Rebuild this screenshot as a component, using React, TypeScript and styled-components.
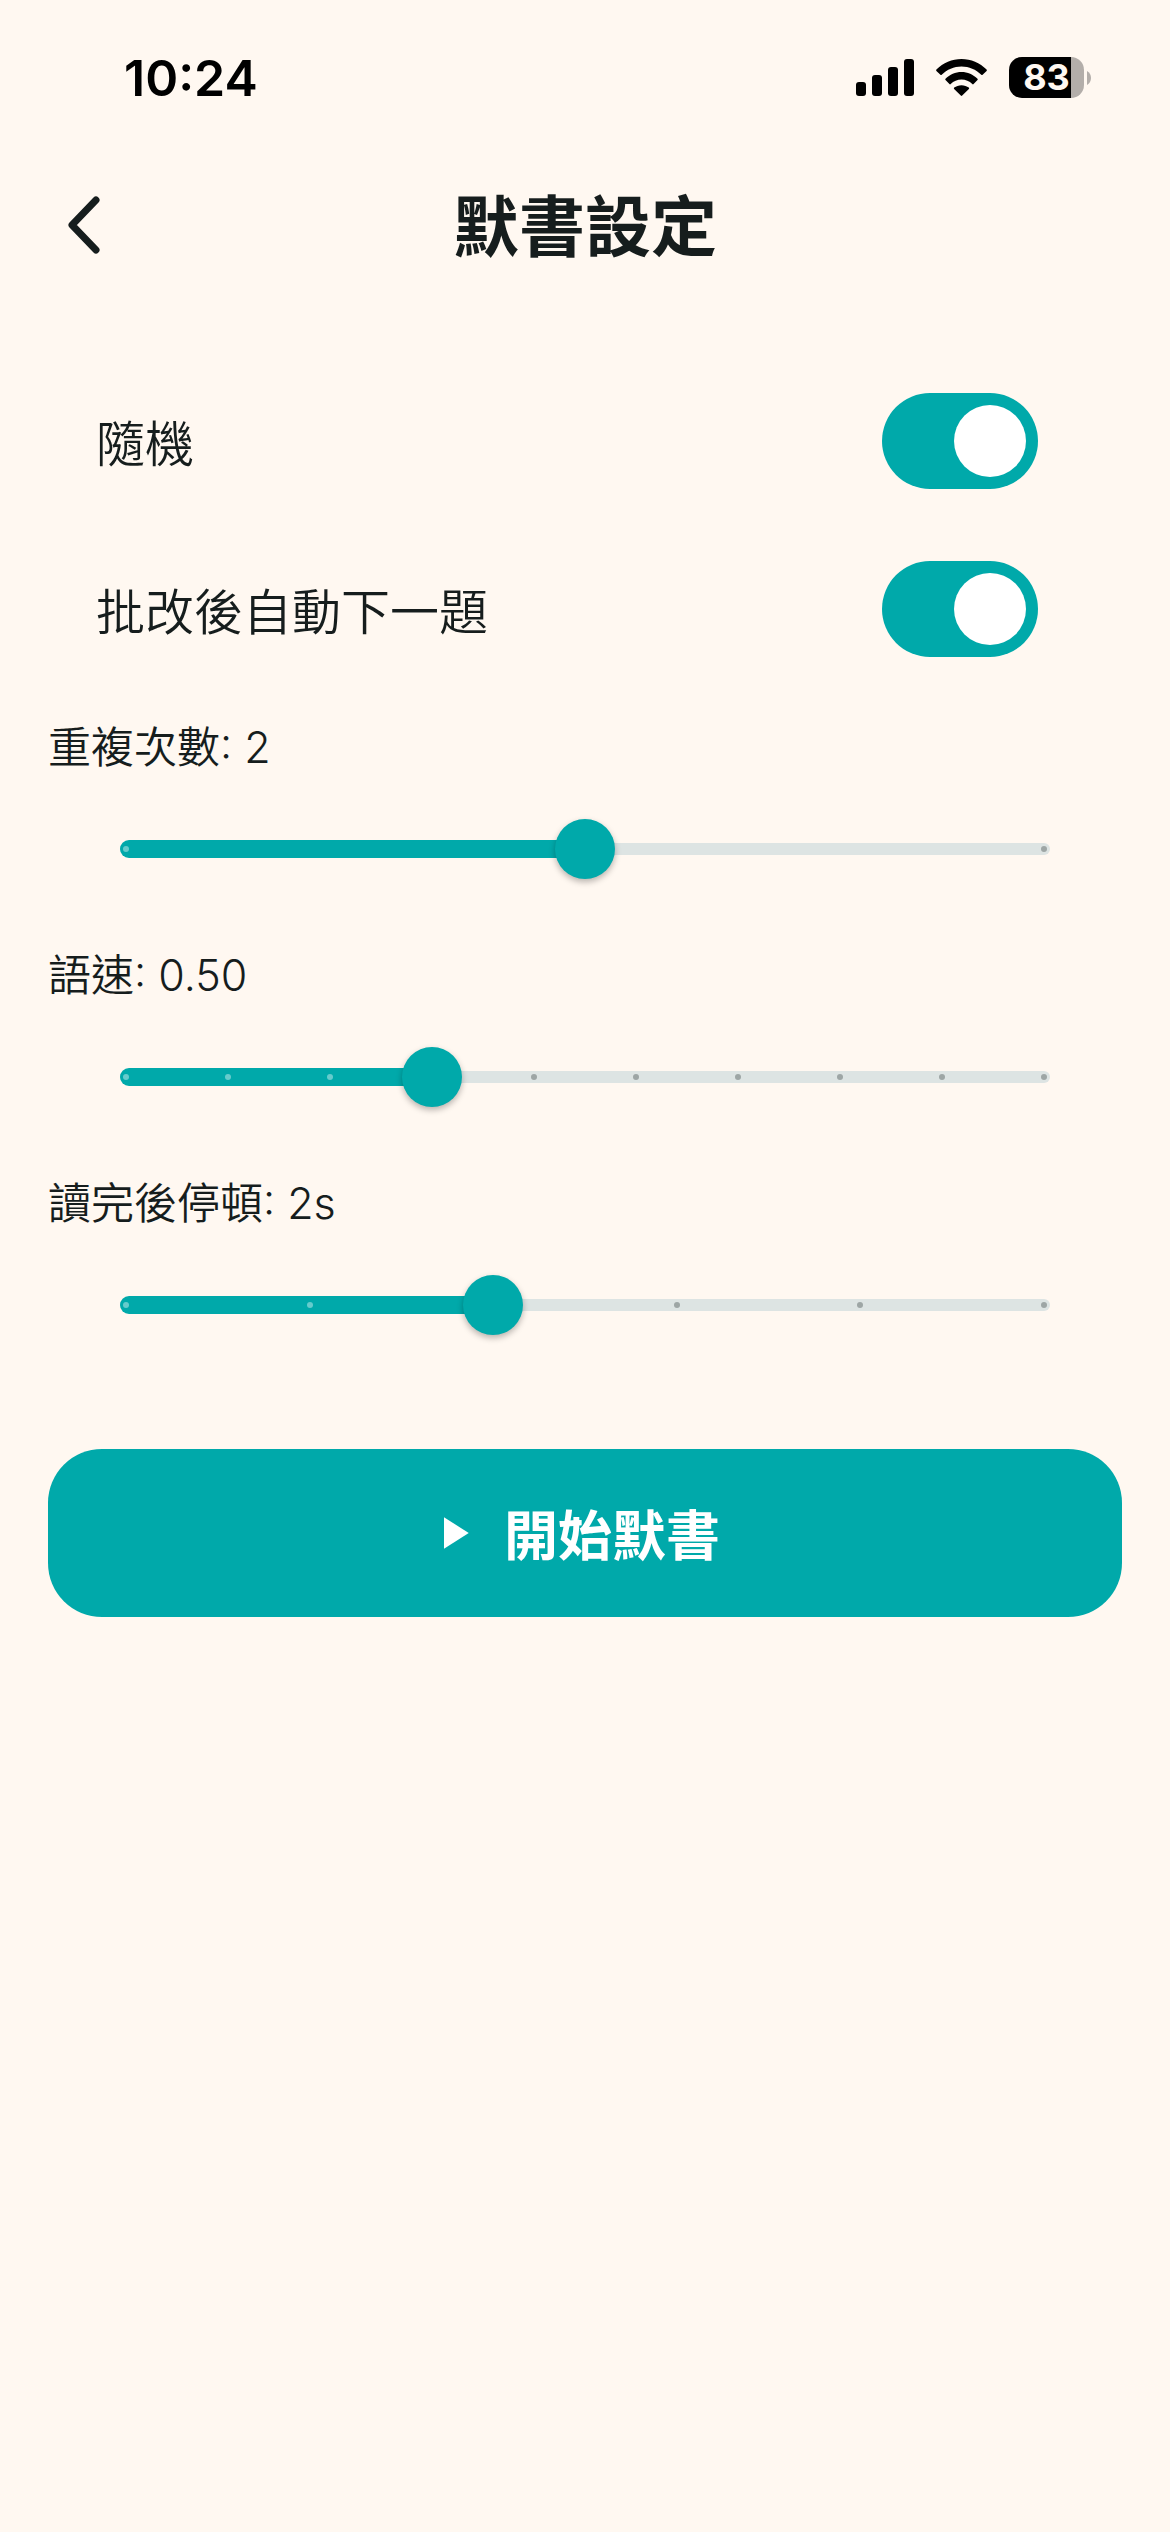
import React, { useId, useState } from "react";
import styled, { createGlobalStyle } from "styled-components";

const color = {
  surface: "#fff8f1",
  primary: "#00a9aa",
  ink: "#161d1d",
  rail: "#dde4e3",
  railDot: "#9ea6a5",
  fillDot: "#66cbcc",
};

const cjkFirst = `"Noto Sans CJK TC", Inter, sans-serif`;

const GlobalStyle = createGlobalStyle`
  *, *::before, *::after { box-sizing: border-box; }
  html { background: ${color.surface}; }
  body {
    margin: 0;
    background: ${color.surface};
    color: ${color.ink};
    font-family: Inter, "Noto Sans CJK TC", sans-serif;
  }
`;

const Screen = styled.div`
  min-height: 100vh;
  display: flex;
  flex-direction: column;
`;

const StatusBar = styled.div`
  height: 141px;
  padding: 14px 79px 0 124px;
  display: flex;
  align-items: center;
  justify-content: space-between;
  color: #000;
`;

const Clock = styled.time`
  font-size: 50px;
  line-height: 60px;
  font-weight: 600;
`;

const StatusIcons = styled.div`
  display: flex;
  align-items: center;
  gap: 22px;
`;

const BatteryGroup = styled.div`
  display: flex;
  align-items: center;
  gap: 3px;
`;

const BatteryBody = styled.div`
  width: 75px;
  height: 41px;
  border-radius: 13px;
  background: linear-gradient(to right, #000 62px, #b3aeaa 62px);
  color: ${color.surface};
  font-size: 36px;
  line-height: 41px;
  font-weight: 700;
  text-align: center;
`;

const AppBar = styled.header`
  height: 168px;
  padding: 0 12px;
  display: grid;
  grid-template-columns: 144px 1fr 144px;
  align-items: center;
`;

const BackButton = styled.button`
  width: 144px;
  height: 144px;
  padding: 0 0 0 55px;
  border: 0;
  background: none;
  color: inherit;
  display: flex;
  align-items: center;
  cursor: pointer;
`;

const Title = styled.h1`
  margin: 0;
  padding-bottom: 6px;
  font-family: ${cjkFirst};
  font-size: 66px;
  line-height: 84px;
  font-weight: 700;
  text-align: center;
`;

const Content = styled.main`
  padding: 48px;
  display: flex;
  flex-direction: column;
`;

const SwitchTile = styled.label`
  height: 168px;
  padding: 0 84px 0 48px;
  display: flex;
  align-items: center;
  justify-content: space-between;
  font-family: ${cjkFirst};
  font-size: 49px;
  line-height: 72px;
  font-weight: 350;
  cursor: pointer;
`;

const Toggle = styled.input`
  appearance: none;
  width: 156px;
  height: 96px;
  margin: 0;
  padding: 12px;
  border-radius: 48px;
  background: ${color.rail};
  display: flex;
  cursor: pointer;

  &::before {
    content: "";
    width: 72px;
    height: 72px;
    border-radius: 50%;
    background: #fff;
  }

  &:checked {
    background: ${color.primary};
    justify-content: flex-end;
  }
`;

const Setting = styled.div`
  padding-top: 24px;
  display: flex;
  flex-direction: column;
`;

const SettingLabel = styled.label`
  font-size: 43px;
  line-height: 60px;
  font-weight: 350;
`;

const SliderBox = styled.div`
  height: 144px;
  margin: 0 48px;
  display: grid;
  align-items: center;

  & > * {
    grid-area: 1 / 1;
  }
`;

const Rail = styled.div`
  height: 12px;
  margin: 0 24px;
  border-radius: 6px;
  background: ${color.rail};
`;

const FillArea = styled.div`
  margin: 0 24px;
`;

const Fill = styled.div`
  height: 18px;
  border-radius: 9px;
  background: ${color.primary};
`;

const Dots = styled.div`
  margin: 0 27px;
  display: flex;
  justify-content: space-between;
`;

const Dot = styled.span<{ $active: boolean }>`
  width: 6px;
  height: 6px;
  border-radius: 50%;
  background: ${(p) => (p.$active ? color.fillDot : color.railDot)};
`;

const Range = styled.input`
  appearance: none;
  width: 100%;
  height: 60px;
  margin: 0;
  background: transparent;
  cursor: pointer;

  &::-webkit-slider-thumb {
    appearance: none;
    width: 60px;
    height: 60px;
    border-radius: 50%;
    background: ${color.primary};
    box-shadow: 0 3px 6px rgba(0, 0, 0, 0.28);
  }
`;

const StartButton = styled.button`
  height: 168px;
  margin-top: 72px;
  padding: 0 72px 0 48px;
  border: 0;
  border-radius: 54px;
  background: ${color.primary};
  color: #fff;
  display: flex;
  align-items: center;
  justify-content: center;
  gap: 24px;
  font-family: ${cjkFirst};
  font-size: 54px;
  line-height: 72px;
  font-weight: 700;
  cursor: pointer;
`;

function SignalIcon() {
  return (
    <svg width="58" height="37" viewBox="0 0 58 37" fill="currentColor" aria-hidden="true">
      <rect x="0" y="23" width="10" height="14" rx="3" />
      <rect x="16" y="16" width="10" height="21" rx="3" />
      <rect x="32" y="8" width="10" height="29" rx="3" />
      <rect x="48" y="0" width="10" height="37" rx="3" />
    </svg>
  );
}

function WifiIcon() {
  return (
    <svg width="51" height="37" viewBox="0 0 51 37" fill="currentColor" aria-hidden="true">
      <path d="M.4 10.6C7.2 3.9 16 0 25.500 0s18.300 3.900 25.100 10.600c.4.4.4.900 0 1.300l-4 3.800c-.4.4-.9.400-1.300 0C40 10.400 33 7.400 25.500 7.400S11 10.400 5.700 15.700c-.4.400-.9.400-1.300 0l-4-3.800c-.4-.4-.4-.9 0-1.300z" />
      <path d="M9.500 19.800c4.300-4.200 9.900-6.700 16-6.700s11.700 2.500 16 6.700c.4.400.4.900 0 1.300l-3.900 4c-.4.400-.9.400-1.300 0-2.900-2.800-6.700-4.500-10.800-4.500s-7.900 1.700-10.800 4.500c-.4.400-.9.400-1.300 0l-3.900-4c-.4-.4-.4-.9 0-1.300z" />
      <path d="M18.200 28.600c2-1.500 4.500-2.400 7.300-2.400s5.300.9 7.300 2.400c.5.400.5.900.1 1.300l-6.700 6.700c-.4.400-1 .4-1.400 0l-6.700-6.700c-.4-.4-.4-.9.100-1.300z" />
    </svg>
  );
}

function BatteryNub() {
  return (
    <svg width="4" height="14" viewBox="0 0 4 14" fill="#b3aeaa" aria-hidden="true">
      <path d="M0 0c2.400 1.200 4 3.900 4 7s-1.600 5.800-4 7z" />
    </svg>
  );
}

function ChevronIcon() {
  return (
    <svg width="34" height="58" viewBox="0 0 34 58" fill="none" aria-hidden="true">
      <path
        d="M29 4 5 29l24 25"
        stroke="currentColor"
        strokeWidth="7"
        strokeLinecap="round"
        strokeLinejoin="round"
      />
    </svg>
  );
}

function PlayIcon() {
  return (
    <svg width="54" height="54" viewBox="0 0 24 24" fill="currentColor" aria-hidden="true">
      <path d="M8 5v14l11-7z" />
    </svg>
  );
}

function SwitchRow({ text }: { text: string }) {
  const [on, setOn] = useState(true);
  return (
    <SwitchTile>
      {text}
      <Toggle type="checkbox" role="switch" checked={on} onChange={(e) => setOn(e.target.checked)} />
    </SwitchTile>
  );
}

interface SliderProps {
  text: string;
  min: number;
  max: number;
  step: number;
  initial: number;
  format: (value: number) => string;
}

function SliderSetting({ text, min, max, step, initial, format }: SliderProps) {
  const id = useId();
  const [value, setValue] = useState(initial);
  const divisions = Math.round((max - min) / step);
  const fraction = (value - min) / (max - min);
  const current = Math.round(fraction * divisions);

  return (
    <Setting>
      <SettingLabel htmlFor={id}>
        {`${text}: ${format(value)}`}
      </SettingLabel>
      <SliderBox>
        <Rail />
        <FillArea>
          <Fill style={{ width: `calc(6px + (100% - 12px) * ${fraction})` }} />
        </FillArea>
        <Dots>
          {Array.from({ length: divisions + 1 }, (_, i) => (
            <Dot key={i} $active={i <= current} />
          ))}
        </Dots>
        <Range
          id={id}
          type="range"
          min={min}
          max={max}
          step={step}
          value={value}
          onChange={(e) => setValue(Number(e.target.value))}
        />
      </SliderBox>
    </Setting>
  );
}

export default function App() {
  return (
    <Screen>
      <GlobalStyle />
      <StatusBar>
        <Clock>10:24</Clock>
        <StatusIcons>
          <SignalIcon />
          <WifiIcon />
          <BatteryGroup>
            <BatteryBody>83</BatteryBody>
            <BatteryNub />
          </BatteryGroup>
        </StatusIcons>
      </StatusBar>
      <AppBar>
        <BackButton type="button" aria-label="返回">
          <ChevronIcon />
        </BackButton>
        <Title>默書設定</Title>
      </AppBar>
      <Content>
        <SwitchRow text="隨機" />
        <SwitchRow text="批改後自動下一題" />
        <SliderSetting text="重複次數" min={1} max={3} step={1} initial={2} format={(v) => String(v)} />
        <SliderSetting text="語速" min={0.2} max={1.1} step={0.1} initial={0.5} format={(v) => v.toFixed(2)} />
        <SliderSetting text="讀完後停頓" min={0} max={5} step={1} initial={2} format={(v) => `${v}s`} />
        <StartButton type="button">
          <PlayIcon />
          開始默書
        </StartButton>
      </Content>
    </Screen>
  );
}
